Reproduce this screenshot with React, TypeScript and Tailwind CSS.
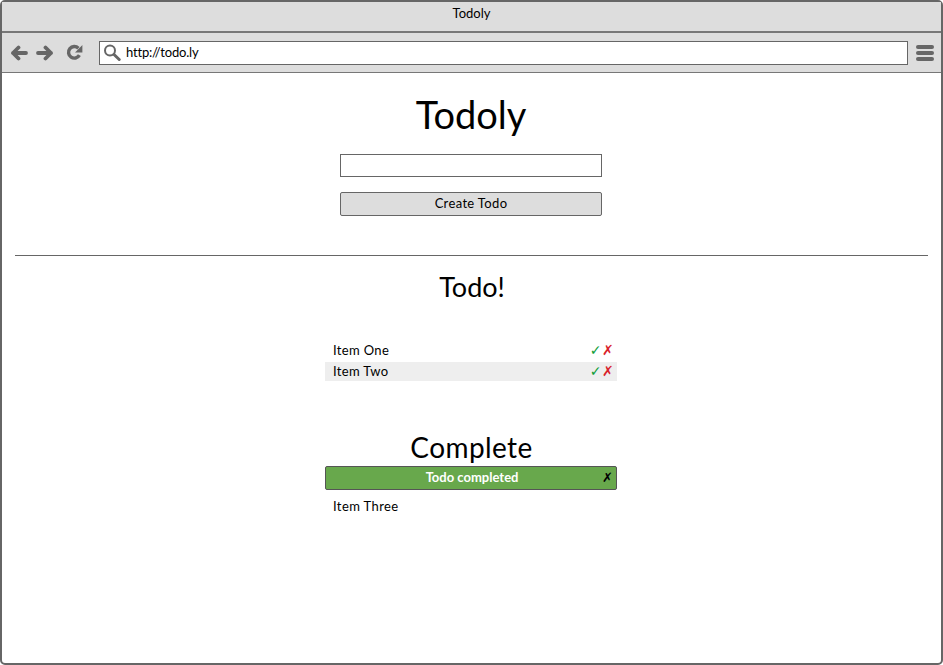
import React from 'react';

const font = "font-['Lato','Noto_Sans',sans-serif]";

const BackIcon = () => (
  <svg width="18" height="16" viewBox="0 0 18 16" fill="none" stroke="#666" strokeWidth="3.8" strokeLinecap="round" strokeLinejoin="round">
    <path d="M16 8H3M8.5 2.5 3 8l5.5 5.5" />
  </svg>
);

const ForwardIcon = () => (
  <svg width="18" height="16" viewBox="0 0 18 16" fill="none" stroke="#666" strokeWidth="3.8" strokeLinecap="round" strokeLinejoin="round">
    <path d="M2 8h13M9.5 2.5 15 8l-5.5 5.5" />
  </svg>
);

const ReloadIcon = () => (
  <svg width="17" height="17" viewBox="0 0 17 17" fill="none">
    <path d="M13.4 11.2A5.8 5.8 0 1 1 12.4 4.2" stroke="#666" strokeWidth="3.4" />
    <path d="M16.4 1v7.4H9z" fill="#666" />
  </svg>
);

const SearchIcon = () => (
  <svg width="18" height="18" viewBox="0 0 18 18" fill="none" stroke="#666">
    <circle cx="7" cy="6.5" r="5" strokeWidth="2" />
    <path d="M11 10.5l5.2 5" strokeWidth="3" strokeLinecap="round" />
  </svg>
);

const Actions = () => (
  <span className="mb-[2px] flex items-center text-[14px] leading-none font-['DejaVu_Sans',sans-serif]">
    <span className="font-bold text-[#0f9d3a]">✓</span>
    <span className="font-bold text-[#d9222a]">✗</span>
  </span>
);

const App = () => {
  return (
    <div className={`h-[665px] w-[943px] overflow-hidden bg-white text-black ${font}`}>
      <div className="flex h-full flex-col rounded-[5px] border-2 border-[#666]">
        {/* Window title */}
        <div className="flex h-[31px] shrink-0 items-center justify-center border-b-2 border-[#777] bg-[#ddd] pb-[6px] text-[13px]">
          Todoly
        </div>

        {/* Browser toolbar */}
        <div className="flex h-[40px] shrink-0 items-center border-b border-[#777] bg-[#ddd] pl-[8px] pr-[6px]">
          <BackIcon />
          <span className="ml-[8px]"><ForwardIcon /></span>
          <span className="ml-[12px]"><ReloadIcon /></span>
          <div className="ml-[16px] flex h-[24px] w-[809px] items-center border border-[#666] bg-white pl-[3px] text-[13px] tracking-[-0.2px]">
            <SearchIcon />
            <span className="ml-[5px]">http://todo.ly</span>
          </div>
          <div className="ml-[8px] flex flex-col gap-[2px]">
            <span className="h-[4px] w-[18px] rounded-[2px] bg-[#666]" />
            <span className="h-[4px] w-[18px] rounded-[2px] bg-[#666]" />
            <span className="h-[4px] w-[18px] rounded-[2px] bg-[#666]" />
          </div>
        </div>

        {/* Page */}
        <div className="flex flex-col items-center pr-[1px]">
          <h1 className="mt-[17px] text-[38px] leading-[48px]">Todoly</h1>
          <input className="mt-[16px] h-[23px] w-[262px] border border-[#666] bg-white" />
          <button className="mt-[15px] h-[24px] w-[262px] rounded-[2px] border border-[#666] bg-[#ddd] text-[13px] tracking-[0.35px]">
            Create Todo
          </button>

          <div className="ml-[13px] mt-[39px] h-px w-[913px] self-start bg-[#666]" />

          <h2 className="ml-[2px] mt-[14px] text-[27px] leading-[34px]">Todo!</h2>

          <ul className="mt-[37px] w-[292px] text-[13px] tracking-[0.35px]">
            <li className="flex h-[21px] items-center justify-between pb-[2px] pl-[8px] pr-[3px]">
              Item One
              <Actions />
            </li>
            <li className="flex h-[19px] items-center justify-between bg-[#eee] pl-[8px] pr-[3px]">
              Item Two
              <Actions />
            </li>
          </ul>

          <h2 className="ml-[1px] mt-[49px] text-[28px] leading-[34px] tracking-[0.4px]">Complete</h2>

          <div className="mt-[2px] flex h-[24px] w-[292px] items-center rounded-[2px] border border-[#555] bg-[#68a84c] text-[13px] font-bold text-white">
            <span className="flex-1 pl-[16px] text-center">Todo completed</span>
            <span className="pr-[3px] font-['DejaVu_Sans',sans-serif] text-black">✗</span>
          </div>

          <div className="mt-[6px] w-[292px] pl-[8px] text-[13px] leading-[20px] tracking-[0.4px]">Item Three</div>
        </div>
      </div>
    </div>
  );
};

export default App;
